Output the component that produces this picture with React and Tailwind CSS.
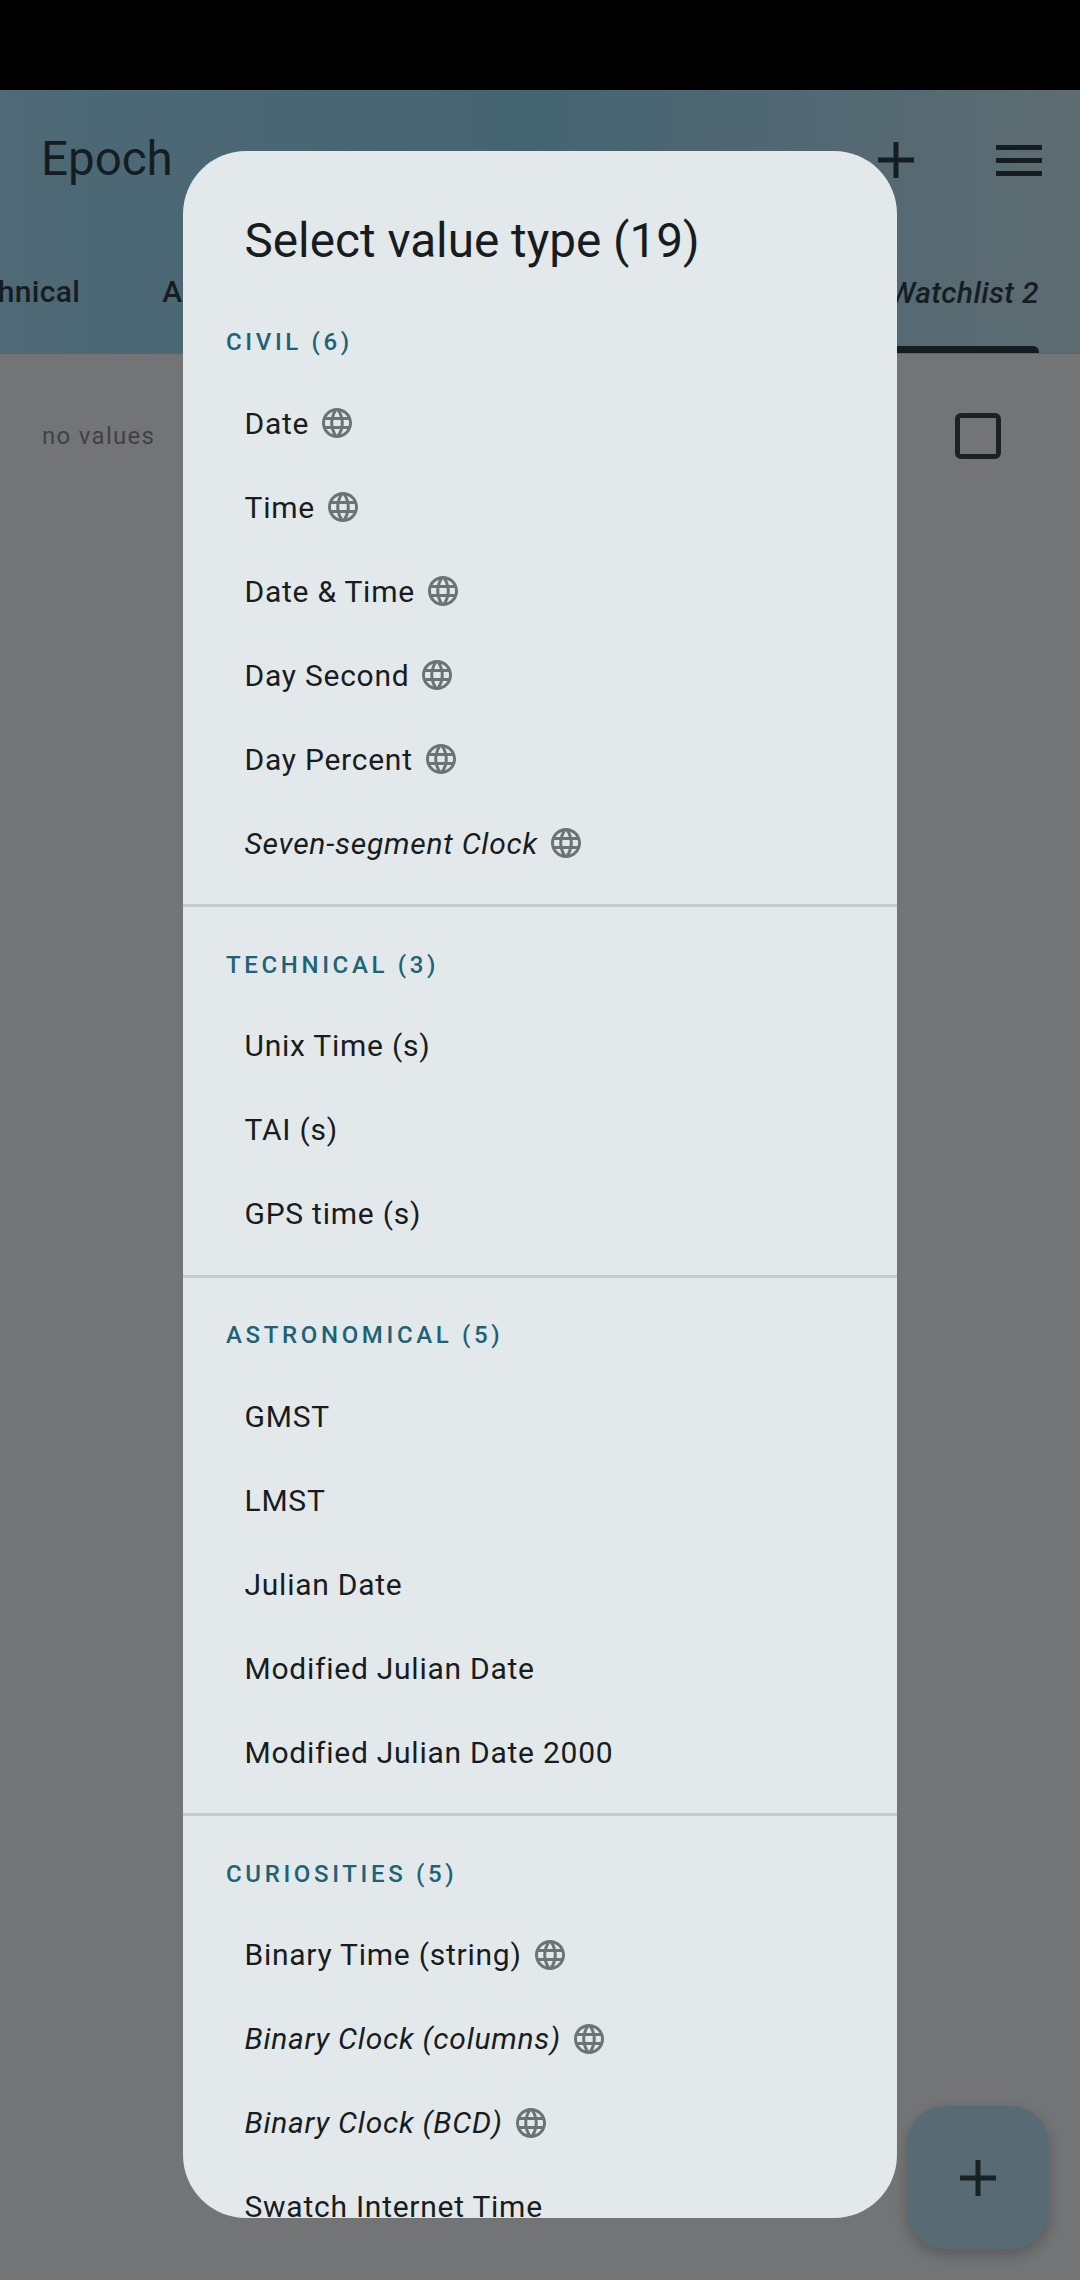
import React from 'react';

const GLOBE_PATH = 'M11.99 2C6.47 2 2 6.48 2 12s4.47 10 9.99 10C17.52 22 22 17.52 22 12S17.52 2 11.99 2zm6.93 6h-2.95c-.32-1.25-.78-2.45-1.38-3.56 1.84.63 3.37 1.91 4.33 3.56zM12 4.04c.83 1.2 1.48 2.53 1.91 3.96h-3.82c.43-1.43 1.08-2.76 1.91-3.96zM4.26 14C4.1 13.36 4 12.69 4 12s.1-1.36.26-2h3.38c-.08.66-.14 1.32-.14 2 0 .68.06 1.34.14 2H4.26zm.82 2h2.95c.32 1.25.78 2.45 1.38 3.56-1.84-.63-3.37-1.9-4.33-3.56zm2.95-8H5.08c.96-1.66 2.49-2.93 4.33-3.56C8.81 5.55 8.35 6.75 8.03 8zM12 19.96c-.83-1.2-1.48-2.53-1.91-3.96h3.82c-.43 1.43-1.08 2.76-1.91 3.96zM14.34 14H9.66c-.09-.66-.16-1.32-.16-2 0-.68.07-1.35.16-2h4.68c.09.65.16 1.32.16 2 0 .68-.07 1.34-.16 2zm.25 5.56c.6-1.11 1.06-2.31 1.38-3.56h2.95c-.96 1.65-2.49 2.93-4.33 3.56zM16.36 14c.08-.66.14-1.32.14-2 0-.68-.06-1.34-.14-2h3.38c.16.64.26 1.31.26 2s-.1 1.36-.26 2h-3.38z';

const sections = [
  {
    title: 'CIVIL (6)',
    items: [
      { name: 'Date', web: true },
      { name: 'Time', web: true },
      { name: 'Date & Time', web: true },
      { name: 'Day Second', web: true },
      { name: 'Day Percent', web: true },
      { name: 'Seven-segment Clock', web: true, italic: true },
    ],
  },
  {
    title: 'TECHNICAL (3)',
    items: [{ name: 'Unix Time (s)' }, { name: 'TAI (s)' }, { name: 'GPS time (s)' }],
  },
  {
    title: 'ASTRONOMICAL (5)',
    items: [
      { name: 'GMST' },
      { name: 'LMST' },
      { name: 'Julian Date' },
      { name: 'Modified Julian Date' },
      { name: 'Modified Julian Date 2000' },
    ],
  },
  {
    title: 'CURIOSITIES (5)',
    items: [
      { name: 'Binary Time (string)', web: true },
      { name: 'Binary Clock (columns)', web: true, italic: true },
      { name: 'Binary Clock (BCD)', web: true, italic: true },
      { name: 'Swatch Internet Time' },
    ],
  },
];

const Globe = () => (
  <svg viewBox="0 0 24 24" className="ml-[10px] h-[36px] w-[36px] shrink-0 fill-[#6d7275]">
    <path d={GLOBE_PATH} />
  </svg>
);

const Plus = ({ className }) => (
  <svg viewBox="0 0 36 36" className={className}>
    <path d="M15.5 0h5v15.5H36v5H20.5V36h-5V20.5H0v-5h15.5z" />
  </svg>
);

const Section = ({ section, last }) => (
  <div className={last ? '' : 'border-b-[3px] border-[#c6ccce] pb-[19px]'}>
    <div className="flex h-[34px] items-center pl-[43px] text-[24px] font-medium tracking-[3.65px] text-[#1d6378]">
      {section.title}
    </div>
    <div className="mt-[22px]">
      {section.items.map((item) => (
        <div key={item.name} className="flex h-[84px] items-center pl-[61.5px] text-[30px] tracking-[0.75px] text-[#191c1e]">
          <span className={item.italic ? 'italic' : ''}>{item.name}</span>
          {item.web && <Globe />}
        </div>
      ))}
    </div>
  </div>
);

export default function App() {
  return (
    <div className="relative h-[2280px] w-[1080px] overflow-hidden bg-[#737476] font-['Roboto',sans-serif]">
      <div className="h-[90px] bg-black" />

      {/* App bar and tabs, dimmed by the dialog scrim */}
      <div className="h-[264px] border-b border-[#5e6365] bg-gradient-to-r from-[#4f6976] via-[#456472] to-[#5e6c72] text-[#141e22]">
        <div className="flex h-[122px] items-center justify-between pt-[18px] pl-[41px] pr-[38px]">
          <span className="text-[47.5px] leading-none">Epoch</span>
          <div className="flex items-center gap-[82px]">
            <Plus className="h-[36px] w-[36px] fill-[#141e22]" />
            <div className="flex h-[31px] w-[46px] flex-col justify-between">
              <div className="h-[5px] bg-[#141e22]" />
              <div className="h-[5px] bg-[#141e22]" />
              <div className="h-[5px] bg-[#141e22]" />
            </div>
          </div>
        </div>
        <div className="flex h-[141px] items-end justify-between overflow-hidden pr-[41px] text-[30px] font-medium tracking-[0.36px]">
          <div className="ml-[-52px] flex gap-[82px] pb-[39px]">
            <span>Technical</span>
            <span>Astronomical</span>
          </div>
          <div className="flex flex-col">
            <span className="italic">Watchlist 2</span>
            <div className="mt-[31px] h-[7px] rounded-t-[6px] bg-[#141e22]" />
          </div>
        </div>
      </div>

      {/* Empty list */}
      <div className="flex items-center justify-between pt-[59px] pl-[42px] pr-[79px]">
        <span className="text-[24px] tracking-[1.3px] text-[#3f4245]">no values</span>
        <div className="h-[46px] w-[46px] rounded-[6px] border-[5px] border-[#1a2226]" />
      </div>

      {/* Select value type dialog */}
      <div className="absolute left-[183px] top-[151px] h-[2067px] w-[714px] overflow-hidden rounded-[63px] bg-[#e3e9eb]">
        <div className="flex h-[122px] items-end pb-[7px] pl-[61.5px] text-[47.7px] leading-none text-[#191c1e]">
          Select value type (19)
        </div>
        <div className="pt-[52px]">
          {sections.map((section, i) => (
            <div key={section.title} className={i === 0 ? '' : 'pt-[40.5px]'}>
              <Section section={section} last={i === sections.length - 1} />
            </div>
          ))}
        </div>
      </div>

      {/* FAB */}
      <div className="absolute left-[907px] top-[2106px] flex h-[143px] w-[142px] items-center justify-center rounded-[38px] bg-[#586b75] shadow-[0_6px_14px_rgba(0,0,0,0.22)]">
        <Plus className="h-[36px] w-[36px] fill-[#172126]" />
      </div>
    </div>
  );
}
